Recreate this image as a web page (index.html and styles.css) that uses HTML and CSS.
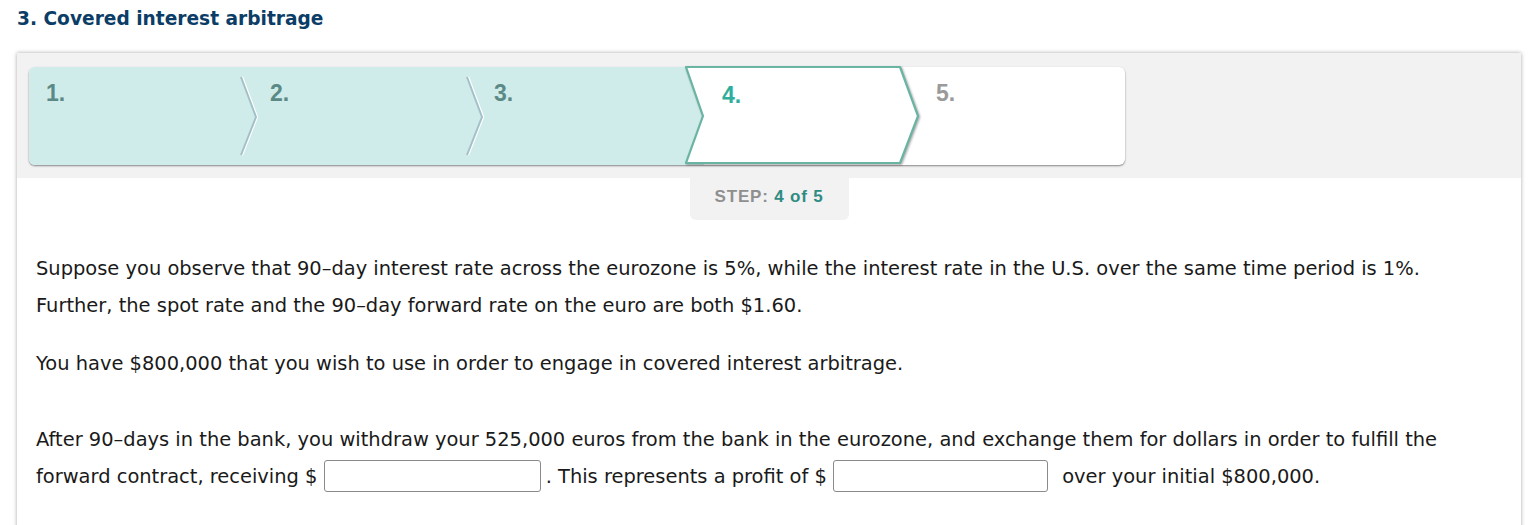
FILE: index.html
```html
<!DOCTYPE html>
<html>
<head>
<meta charset="utf-8">
<link rel="stylesheet" href="styles.css">
</head>
<body>
<div class="page">
  <h1 class="title">3. Covered interest arbitrage</h1>
  <div class="panel">
    <div class="panel-head">
      <div class="stepper">
        <div class="step step-1 done"><span class="num">1.</span>
          <svg class="sep" width="20" height="98" viewBox="0 0 20 98"><polyline points="4,10 19,50 4,88" fill="none" stroke="#ffffff" stroke-width="2.4"/><polyline points="3,10 18,50 3,88" fill="none" stroke="#a2c0c8" stroke-width="2"/></svg>
        </div>
        <div class="step step-2 done"><span class="num">2.</span>
          <svg class="sep" width="20" height="98" viewBox="0 0 20 98"><polyline points="4,10 19,50 4,88" fill="none" stroke="#ffffff" stroke-width="2.4"/><polyline points="3,10 18,50 3,88" fill="none" stroke="#a2c0c8" stroke-width="2"/></svg>
        </div>
        <div class="step step-3 done"><span class="num">3.</span></div>
        <div class="step step-4 current">
          <svg class="shape" width="240" height="100" viewBox="0 0 240 100"><polygon points="1,1 215,1 233,50 215,97 1,97 18,50" fill="#ffffff" stroke="#6ab4a3" stroke-width="2.2" stroke-linejoin="round"/></svg>
          <span class="num">4.</span>
        </div>
        <div class="step step-5"><span class="num">5.</span></div>
      </div>
    </div>
    <div class="step-count"><span class="lbl">STEP:</span> <span class="val">4 of 5</span></div>
    <div class="content">
      <p class="p1">Suppose you observe that 90–day interest rate across the eurozone is 5%, while the interest rate in the U.S. over the same time period is 1%. Further, the spot rate and the 90–day forward rate on the euro are both $1.60.</p>
      <p class="p2">You have $800,000 that you wish to use in order to engage in covered interest arbitrage.</p>
      <p class="p3">After 90–days in the bank, you withdraw your 525,000 euros from the bank in the eurozone, and exchange them for dollars in order to fulfill the forward contract, receiving $ <input class="ans ans-1" type="text">. This represents a profit of $ <input class="ans ans-2" type="text"> over your initial $800,000.</p>
    </div>
  </div>
</div>
</body>
</html>
```

FILE: styles.css
```css
html, body {
  margin: 0;
  padding: 0;
  background: #ffffff;
}
.page {
  padding: 7px 8px 0 17px;
}
.title {
  margin: 0;
  font-family: "DejaVu Sans", Verdana, sans-serif;
  font-weight: bold;
  font-size: 18.6px;
  line-height: 23px;
  color: #0b3d66;
}
.panel {
  margin-top: 23px;
  width: 1504px;
  background: #fff;
  box-shadow: 0 0 4px rgba(0,0,0,0.35);
  height: 480px;
}
.panel-head {
  background: #f2f2f2;
  padding: 14px 0 13px 12px;
}
.stepper {
  display: flex;
  width: 1096px;
  height: 98px;
  border-radius: 6px;
  background: #ffffff;
  box-shadow: 0 1px 2px rgba(0,0,0,0.45);
}
.step {
  position: relative;
  height: 98px;
  box-sizing: border-box;
  font-family: "Liberation Sans", Arial, sans-serif;
  font-weight: bold;
  font-size: 23px;
  line-height: 25px;
  padding-top: 14px;
}
.step.done {
  background: #cfecea;
}
.step .num {
  position: relative;
}
.done .num {
  color: #5b8a86;
}
.step-1 {
  width: 213px;
  padding-left: 17px;
  border-radius: 6px 0 0 6px;
}
.step-2 {
  width: 225px;
  padding-left: 28px;
}
.step-3 {
  width: 219px;
  padding-left: 27px;
}
.step-4 {
  width: 217px;
  padding-left: 36px;
  padding-top: 16px;
  background: linear-gradient(to right, #cfecea 18px, transparent 18px);
  z-index: 2;
}
.step-4 .num {
  color: #2eae9c;
}
.step-5 {
  width: 222px;
  padding-left: 33px;
  color: #9a9a9a;
}
.sep {
  position: absolute;
  top: 0;
  z-index: 1;
}
.step-1 .sep { right: -16px; }
.step-2 .sep { right: -17px; }
.shape {
  position: absolute;
  left: -1px;
  top: -1px;
  filter: drop-shadow(1px 1px 1px rgba(0,0,0,0.35));
}
.step-count {
  width: 159px;
  margin: 0 auto;
  height: 42px;
  box-sizing: border-box;
  background: #f2f2f2;
  border-radius: 0 0 6px 6px;
  text-align: center;
  font-family: "Liberation Sans", Arial, sans-serif;
  font-weight: bold;
  font-size: 17px;
  letter-spacing: 0.8px;
  line-height: 20px;
  padding-top: 9px;
}
.step-count .lbl { color: #8f8f8f; }
.step-count .val { color: #2f8c82; }
.content {
  padding: 30px 40px 0 19px;
  font-family: "DejaVu Sans", Verdana, sans-serif;
  font-size: 19.45px;
  line-height: 37px;
  color: #1a1a1a;
}
.content p {
  margin: 0;
}
.p2 { margin-top: 21px !important; }
.p3 { margin-top: 39px !important; }
.ans {
  width: 217px;
  height: 32px;
  box-sizing: border-box;
  border: 1px solid #8a8a8a;
  border-radius: 3px;
  vertical-align: middle;
  margin: -4px 0 0 0;
  padding: 0;
  background: #fff;
}
.ans-1 {
  margin-right: 5px;
}
.ans-2 {
  width: 215px;
  margin-right: 8px;
}
```
